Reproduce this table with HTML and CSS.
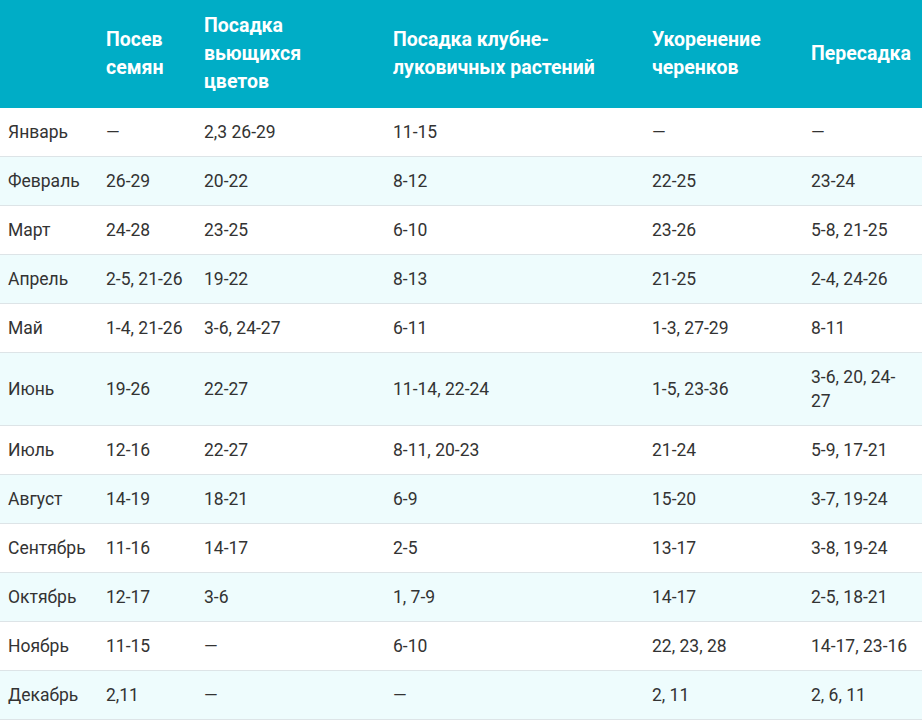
FILE: index.html
```html
<!DOCTYPE html>
<html lang="ru">
<head>
<meta charset="utf-8">
<link rel="stylesheet" href="styles.css">
</head>
<body>
<table class="cal">
<colgroup>
<col class="c1"><col class="c2"><col class="c3"><col class="c4"><col class="c5"><col class="c6">
</colgroup>
<thead>
<tr><th></th><th>Посев семян</th><th>Посадка вьющихся цветов</th><th>Посадка клубне-луковичных растений</th><th>Укоренение черенков</th><th>Пересадка</th></tr>
</thead>
<tbody>
<tr><td>Январь</td><td>—</td><td>2,3 26-29</td><td>11-15</td><td>—</td><td>—</td></tr>
<tr><td>Февраль</td><td>26-29</td><td>20-22</td><td>8-12</td><td>22-25</td><td>23-24</td></tr>
<tr><td>Март</td><td>24-28</td><td>23-25</td><td>6-10</td><td>23-26</td><td>5-8, 21-25</td></tr>
<tr><td>Апрель</td><td>2-5, 21-26</td><td>19-22</td><td>8-13</td><td>21-25</td><td>2-4, 24-26</td></tr>
<tr><td>Май</td><td>1-4, 21-26</td><td>3-6, 24-27</td><td>6-11</td><td>1-3, 27-29</td><td>8-11</td></tr>
<tr><td>Июнь</td><td>19-26</td><td>22-27</td><td>11-14, 22-24</td><td>1-5, 23-36</td><td>3-6, 20, 24-27</td></tr>
<tr><td>Июль</td><td>12-16</td><td>22-27</td><td>8-11, 20-23</td><td>21-24</td><td>5-9, 17-21</td></tr>
<tr><td>Август</td><td>14-19</td><td>18-21</td><td>6-9</td><td>15-20</td><td>3-7, 19-24</td></tr>
<tr><td>Сентябрь</td><td>11-16</td><td>14-17</td><td>2-5</td><td>13-17</td><td>3-8, 19-24</td></tr>
<tr><td>Октябрь</td><td>12-17</td><td>3-6</td><td>1, 7-9</td><td>14-17</td><td>2-5, 18-21</td></tr>
<tr><td>Ноябрь</td><td>11-15</td><td>—</td><td>6-10</td><td>22, 23, 28</td><td>14-17, 23-16</td></tr>
<tr><td>Декабрь</td><td>2,11</td><td>—</td><td>—</td><td>2, 11</td><td>2, 6, 11</td></tr>
</tbody>
</table>
</body>
</html>
```
FILE: styles.css
```css
html, body {
  margin: 0;
  padding: 0;
  background: #ffffff;
}
body {
  font-family: Roboto, "Liberation Sans", sans-serif;
}
.cal {
  width: 922px;
  border-collapse: collapse;
  table-layout: fixed;
}
.c1 { width: 98px; }
.c2 { width: 98px; }
.c3 { width: 189px; }
.c4 { width: 259px; }
.c5 { width: 159px; }
.c6 { width: 119px; }
.cal th {
  background: #00adc6;
  color: #ffffff;
  font-weight: 700;
  font-size: 19.5px;
  line-height: 28px;
  text-align: left;
  vertical-align: middle;
  padding: 12px 20px 12px 8px;
}
.cal td {
  font-size: 17.5px;
  line-height: 24px;
  color: #333333;
  padding: 12px 8px;
  vertical-align: middle;
  border-bottom: 1px solid #dde4e7;
}
.cal tbody tr:nth-child(even) td {
  background: #eefcfd;
}
```
